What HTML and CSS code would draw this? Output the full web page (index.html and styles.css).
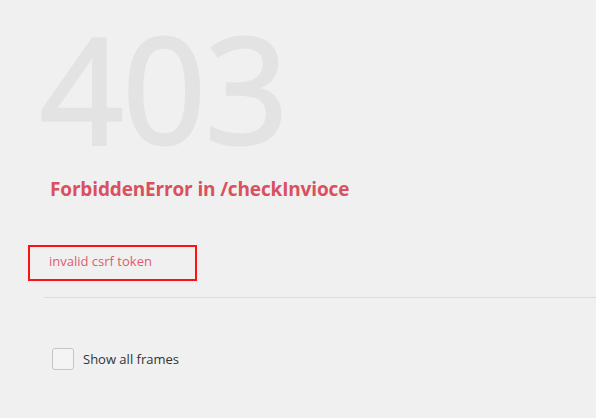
FILE: index.html
```html
<!DOCTYPE html>
<html>
<head>
<meta charset="utf-8">
<link rel="stylesheet" href="styles.css">
</head>
<body>
<div class="page">
  <div class="code">403</div>
  <h1 class="title">ForbiddenError in /checkInvioce</h1>
  <div class="message"><span class="msg-text">invalid csrf token</span></div>
  <hr class="divider">
  <label class="frames"><span class="box"></span><span class="frames-label">Show all frames</span></label>
</div>
</body>
</html>
```
FILE: styles.css
```css
html, body {
  margin: 0;
  padding: 0;
  background: #f0f0f0;
}
body {
  font-family: "Open Sans", "Noto Sans", sans-serif;
  width: 596px;
  height: 418px;
  overflow: hidden;
}
.page {
  padding: 0 0 0 44px;
  display: flex;
  flex-direction: column;
}
.code {
  font-size: 146px;
  line-height: 130px;
  color: #e3e3e3;
  -webkit-text-stroke: 3px #e3e3e3;
  margin: 23px 0 0 -4px;
  letter-spacing: -1px;
  height: 130px;
}
.title {
  font-size: 19px;
  font-weight: 700;
  color: #d9505f;
  margin: 23px 0 0 6px;
  line-height: 26px;
  letter-spacing: -0.15px;
}
.message {
  margin: 43px 0 0 -16px;
  height: 32px;
  border: 2px solid #f11;
  display: flex;
  align-items: center;
  padding-left: 19px;
  box-sizing: content-box;
  width: 146px;
}
.msg-text {
  font-size: 13px;
  color: #de5c6b;
  margin-top: -4px;
}
.divider {
  border: 0;
  border-top: 1px solid #dcdcdc;
  margin: 16px 0 0 0;
  height: 0;
}
.frames {
  display: flex;
  align-items: center;
  margin: 50px 0 0 8px;
  gap: 9px;
}
.box {
  width: 20px;
  height: 20px;
  border: 1px solid #c6c6c6;
  border-radius: 3px;
  background: #f4f4f4;
}
.frames-label {
  font-size: 13px;
  color: #333;
}
```
